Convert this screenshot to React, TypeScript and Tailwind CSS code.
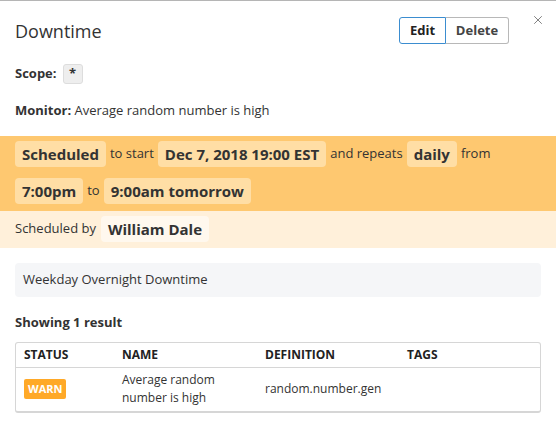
import { X } from "lucide-react";

function Pill({ children, className = "" }: { children: React.ReactNode; className?: string }) {
  return (
    <span className={`inline-flex items-center h-[26px] px-[7px] rounded-[4px] font-bold text-[15px] text-[#333] ${className}`}>
      {children}
    </span>
  );
}

export default function App() {
  return (
    <div
      className="w-[556px] h-[424px] bg-white border-t border-[#b5b5b5] text-[#333] overflow-hidden"
      style={{ fontFamily: '"Open Sans", "Noto Sans", sans-serif' }}
    >
      <div className="flex items-start justify-between pl-[15px] pr-[11px] pt-[16px]">
        <h1 className="text-[18px] leading-[28px] text-[#333]">Downtime</h1>
        <div className="flex items-start gap-[22px]">
          <div className="flex text-[13px] font-bold">
            <button className="h-[27px] w-[47px] rounded-l-[3px] border border-[#3b8dd0] text-[#222]">Edit</button>
            <button className="h-[27px] w-[63px] rounded-r-[3px] border border-l-0 border-[#b8b8b8] text-[#444]">Delete</button>
          </div>
          <X className="w-[14px] h-[14px] text-[#666] -mt-[4px]" strokeWidth={1.4} />
        </div>
      </div>

      <div className="flex items-center gap-[6px] px-[15px] mt-[19px] text-[13px]">
        <span className="font-bold">Scope:</span>
        <span className="inline-flex items-center justify-center w-[20px] h-[20px] rounded-[3px] bg-[#eeeeee] border border-[#dddddd] text-[13px] font-bold">*</span>
      </div>

      <div className="px-[15px] mt-[17px] text-[13px] leading-[18px]">
        <span className="font-bold">Monitor:</span> Average random number is high
      </div>

      <div className="mt-[17px] bg-[#fec870] px-[15px] pt-[5px] pb-[7px] text-[13px]">
        <div className="flex flex-wrap items-center gap-x-[4px] gap-y-[11px]">
          <Pill className="bg-[#ffdea5]">Scheduled</Pill>
          <span>to start</span>
          <Pill className="bg-[#ffdea5]">Dec 7, 2018 19:00 EST</Pill>
          <span>and repeats</span>
          <Pill className="bg-[#ffdea5]">daily</Pill>
          <span>from</span>
          <Pill className="bg-[#ffdea5]">7:00pm</Pill>
          <span>to</span>
          <Pill className="bg-[#ffdea5]">9:00am tomorrow</Pill>
        </div>
      </div>

      <div className="bg-[#fff0da] px-[15px] pt-[5px] pb-[6px] flex items-center gap-[5px] text-[13px]">
        <span>Scheduled by</span>
        <Pill className="bg-[#fff8ee]">William Dale</Pill>
      </div>

      <div className="mx-[15px] mt-[15px] h-[34px] rounded-[4px] bg-[#f5f6f8] px-[8px] flex items-center text-[13px]">
        Weekday Overnight Downtime
      </div>

      <div className="px-[15px] mt-[16px] text-[13px] font-bold">Showing 1 result</div>

      <div className="mx-[15px] mt-[9px] rounded-[3px] border border-[#d6d6d6] border-b-2 text-[12px]">
        <div className="flex h-[25px] items-center border-b border-[#d6d6d6] text-[12px] font-bold uppercase text-[#222]">
          <div className="w-[106px] pl-[8px]">Status</div>
          <div className="w-[143px]">Name</div>
          <div className="w-[142px]">Definition</div>
          <div>Tags</div>
        </div>
        <div className="flex h-[43px] items-center">
          <div className="w-[106px] pl-[8px]">
            <span className="inline-flex items-center h-[20px] px-[4px] rounded-[2px] bg-[#ffa928] text-white text-[11px] font-bold">WARN</span>
          </div>
          <div className="w-[143px] leading-[18px]">
            Average random<br />number is high
          </div>
          <div className="w-[142px]">random.number.gen</div>
          <div></div>
        </div>
      </div>
    </div>
  );
}
